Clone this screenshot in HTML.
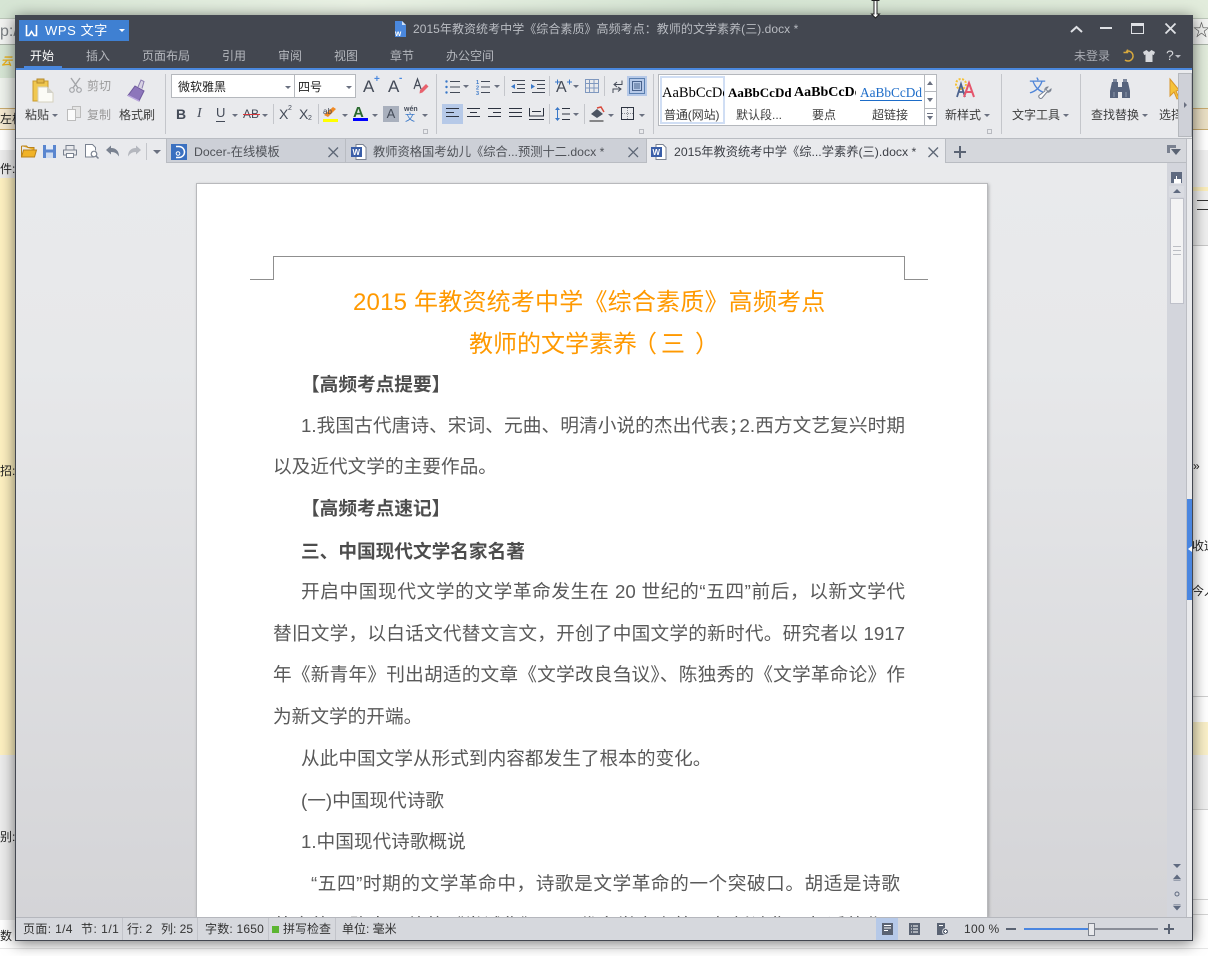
<!DOCTYPE html>
<html><head><meta charset="utf-8"><style>
*{box-sizing:border-box}
html,body{margin:0;padding:0;width:1208px;height:956px;overflow:hidden;background:#fff;font-family:"Liberation Sans","Noto Sans CJK SC",sans-serif}
.a{position:absolute;white-space:nowrap}
.t{position:absolute;white-space:nowrap;font-size:12px;line-height:16px;color:#3c3c3c}
.m{position:absolute;top:48px;font-size:12px;line-height:16px;color:#b4b7bd;white-space:nowrap}
.sep{position:absolute;width:1px;background:#c4c6cb}
.dn{position:absolute;width:0;height:0;border-left:3px solid transparent;border-right:3px solid transparent;border-top:3px solid #6a7080}
svg{position:absolute;overflow:visible}
.l{position:absolute;left:273px;width:632px;height:30px;font-size:18.67px;line-height:30px;color:#595959;white-space:nowrap}
.j{text-align:justify;text-align-last:justify}
.b{font-weight:bold;color:#4d4d4d}
.g{position:absolute;font-family:"Liberation Serif","Noto Serif CJK SC",serif;font-size:14px;line-height:16px;top:85px;overflow:hidden;white-space:nowrap;color:#000}
.tab{position:absolute;top:139px;height:24px;background:#cdd0d7;border-bottom:1px solid #b9bcc2}
.n{position:absolute;top:144px;font-size:12.25px;line-height:16px;color:#4f5258;white-space:nowrap}
</style></head><body>

<!-- background -->
<div class="a" style="left:0;top:0;width:1208px;height:108px;background:linear-gradient(90deg,#d6e5d4,#e9f1e4 30%,#d4e4d2 60%,#e2ecdc)"></div>
<div class="a" style="left:0;top:18px;width:16px;height:27px;background:#f2f3f1;border-bottom:1px solid #aab3a8;border-top:1px solid #bcc7b9"></div>
<div class="a" style="left:0;top:23px;font-size:16px;line-height:18px;color:#7c8084">p:/</div>
<div class="a" style="left:1px;top:57px;width:13px;height:10px;font:bold italic 11px/10px 'Liberation Sans';color:#eab11c">云</div>
<div class="a" style="left:0;top:78px;width:16px;height:30px;background:#eef2ec"></div>
<div class="a" style="left:0;top:108px;width:16px;height:22px;background:#f5ead2;border-top:1px solid #c9ab6e;border-bottom:1px solid #c9ab6e;font-size:12px;line-height:20px;color:#222">左栏</div>
<div class="a" style="left:0;top:150px;width:16px;height:28px;background:#ececec;font-size:12px;line-height:38px;color:#222;overflow:hidden">件:</div>
<div class="a" style="left:0;top:178px;width:16px;height:577px;background:#fdf0c0"></div>
<div class="a" style="left:0;top:463px;font-size:12px;line-height:16px;color:#222">招:</div>
<div class="a" style="left:0;top:755px;width:16px;height:165px;background:#ececec"></div>
<div class="a" style="left:0;top:829px;font-size:12px;line-height:16px;color:#222">别:</div>
<div class="a" style="left:0;top:928px;font-size:12px;line-height:16px;color:#222">数</div>
<div class="a" style="left:1193px;top:18px;width:15px;height:27px;background:#f2f3f1;border-bottom:1px solid #aab3a8;border-top:1px solid #bcc7b9;font-size:17px;line-height:24px;color:#555">☆</div>
<div class="a" style="left:1193px;top:108px;width:15px;height:22px;background:#eadfc4;border-top:1px solid #c9ab6e;border-bottom:1px solid #c9ab6e"></div>
<div class="a" style="left:1193px;top:150px;width:15px;height:96px;background:#efefef;border-bottom:1px solid #c8c8c8"></div>
<div class="a" style="left:1193px;top:187px;width:15px;height:4px;background:#fbeebb"></div>
<div class="a" style="left:1197px;top:200px;width:11px;height:10px;border-top:1px solid #333;border-bottom:1px solid #333"></div>
<div class="a" style="left:1193px;top:458px;font-size:12px;line-height:16px;color:#222">» 《</div>
<div class="a" style="left:1192px;top:538px;font-size:12px;line-height:16px;color:#222">收道</div>
<div class="a" style="left:1192px;top:583px;font-size:12px;line-height:16px;color:#222">今人</div>
<div class="a" style="left:1193px;top:696px;width:15px;height:1px;background:#cfcfcf"></div>
<div class="a" style="left:1193px;top:722px;width:15px;height:33px;background:#faf0c8"></div>
<div class="a" style="left:1193px;top:755px;width:15px;height:55px;background:#f0f0f0;border-bottom:1px solid #d0d0d0"></div>
<div class="a" style="left:1193px;top:899px;width:15px;height:16px;border-top:1px solid #d4d4d4;border-bottom:1px solid #d4d4d4"></div>
<div class="a" style="left:0;top:948px;width:1208px;height:1px;background:#e6e6e6"></div>

<!-- window -->
<div class="a" style="left:15px;top:15px;width:1178px;height:926px;background:#e9eaed;border:1px solid #434750;box-shadow:0 2px 14px rgba(0,0,0,.55)"></div>
<div class="a" style="left:15px;top:15px;width:1178px;height:53px;background:#434750"></div>
<div class="a" style="left:16px;top:68px;width:1176px;height:2px;background:#4a88de"></div>

<!-- WPS button -->
<div class="a" style="left:19px;top:20px;width:110px;height:21px;background:#3f80d2"></div>
<svg style="left:25px;top:24px" width="13" height="13"><path d="M1.500 1v10.500h2.500l2.500-4 2.500 4h2.500V1" fill="none" stroke="#fff" stroke-width="1.600"/></svg>
<div class="a" style="left:45px;top:22px;font-size:13px;line-height:17px;color:#fff;letter-spacing:.6px">WPS 文字</div>
<div class="dn" style="left:119px;top:29px;border-top-color:#fff"></div>

<!-- title -->
<svg style="left:392px;top:21px" width="16" height="16"><path d="M3 0h7l4 4v12H3z" fill="#4a88de"/><path d="M10 0l4 4h-4z" fill="#cfe0f7"/><text x="3" y="15" font-size="8" fill="#fff" font-weight="bold" font-family="Liberation Sans">w</text></svg>
<div class="a" style="left:413px;top:20px;font-size:12px;line-height:18px;color:#b9bcc2;letter-spacing:.05px">2015年教资统考中学《综合素质》高频考点：教师的文学素养(三).docx *</div>

<!-- window controls -->
<svg style="left:1070px;top:22px" width="110" height="14"><path d="M1 10l5.500-5 5.500 5" fill="none" stroke="#dfe1e5" stroke-width="2"/><path d="M30 6h12" stroke="#dfe1e5" stroke-width="2"/><path d="M61.500 1.500h12v10h-12z" fill="none" stroke="#dfe1e5" stroke-width="1"/><path d="M61 3h13" stroke="#dfe1e5" stroke-width="2"/><path d="M95.500 1.500l10 10M105.500 1.500l-10 10" stroke="#dfe1e5" stroke-width="1.800"/></svg>

<!-- menu -->
<div class="m" style="left:30px;color:#fff">开始</div>
<div class="a" style="left:24px;top:66px;width:38px;height:2px;background:#4a88de"></div>
<div class="m" style="left:86px">插入</div>
<div class="m" style="left:142px">页面布局</div>
<div class="m" style="left:222px">引用</div>
<div class="m" style="left:278px">审阅</div>
<div class="m" style="left:334px">视图</div>
<div class="m" style="left:390px">章节</div>
<div class="m" style="left:446px">办公空间</div>
<div class="m" style="left:1074px;color:#a9acb3">未登录</div>
<svg style="left:1122px;top:49px" width="14" height="14"><path d="M4 2.500a5 5 0 1 1-1 8.500M1.500 3.500h4v-3" fill="none" stroke="#d8a93e" stroke-width="1.500"/></svg>
<svg style="left:1143px;top:50px" width="12" height="12"><path d="M3.500 0L0 2l1.200 3L2.500 4.500V12h7V4.500L10.800 5 12 2 8.500 0 6 2z" fill="#d6d8dc"/></svg>
<div class="a" style="left:1166px;top:46px;font-size:14px;line-height:18px;color:#d6d8dc">?</div>
<div class="dn" style="left:1175px;top:55px;border-top-color:#b9bcc2"></div>

<!-- ribbon: clipboard -->
<svg style="left:32px;top:78px" width="22" height="25"><path d="M1 3h15v20H1z" fill="#f0c850" stroke="#c99a2e"/><path d="M5 1h7v4H5z" fill="#e4b94a" stroke="#b58a2c"/><path d="M6 9h9l6 6v9H6z" fill="#fbfbf6" stroke="#d5d0bd"/><path d="M15 9l6 6h-6z" fill="#d2d2cc"/></svg>
<div class="t" style="left:25px;top:107px">粘贴</div><div class="dn" style="left:52px;top:114px"></div>
<svg style="left:69px;top:78px" width="13" height="15"><path d="M2 0l7 10M11 0L4 10" stroke="#a3a5a9" stroke-width="1.400"/><circle cx="3" cy="12" r="2.300" fill="none" stroke="#a3a5a9" stroke-width="1.200"/><circle cx="10" cy="12" r="2.300" fill="none" stroke="#a3a5a9" stroke-width="1.200"/></svg>
<div class="t" style="left:87px;top:78px;color:#9a9a9a">剪切</div>
<svg style="left:67px;top:106px" width="15" height="15"><path d="M5.500 .5h8v11h-8z" fill="#e4e4e4" stroke="#bcbcbc"/><path d="M.5 3.500h8v11h-8z" fill="#fbfbfb" stroke="#bcbcbc"/></svg>
<div class="t" style="left:87px;top:107px;color:#9a9a9a">复制</div>
<svg style="left:127px;top:78px" width="21" height="24"><path d="M11 9l3-7 3 1.500-2 7" fill="#d8d2e4" stroke="#8b7db0"/><path d="M8 8l9 5-5 10-11-5.500z" fill="#8d76bb" stroke="#6f5a9c"/><path d="M1 17.500l11 5.500" stroke="#bda9df" stroke-width="1.500"/></svg>
<div class="t" style="left:119px;top:107px">格式刷</div>
<div class="sep" style="left:165px;top:74px;height:60px"></div>

<!-- font -->
<div class="a" style="left:171px;top:74px;width:185px;height:24px;background:#fff;border:1px solid #b5b8bd"></div>
<div class="sep" style="left:294px;top:75px;height:22px;background:#b5b8bd"></div>
<div class="t" style="left:178px;top:79px;color:#222">微软雅黑</div>
<div class="dn" style="left:285px;top:86px"></div>
<div class="t" style="left:298px;top:79px;color:#222">四号</div>
<div class="dn" style="left:346px;top:86px"></div>
<div class="a" style="left:363px;top:77px;font-size:17px;line-height:20px;color:#444b58">A</div>
<div class="a" style="left:374px;top:75px;font-size:10px;line-height:10px;color:#4a88de;font-weight:bold">+</div>
<div class="a" style="left:388px;top:77px;font-size:17px;line-height:20px;color:#444b58">A</div>
<div class="a" style="left:399px;top:74px;font-size:10px;line-height:10px;color:#4a88de;font-weight:bold">-</div>
<svg style="left:413px;top:78px" width="15" height="18"><path d="M1 11L4.500 1 8 11M2.500 7.500h4" fill="none" stroke="#444b58" stroke-width="1.200"/><path d="M7 12l6-6 2.500 2.500-6 6-3 1z" fill="#e8626e"/></svg>

<div class="a" style="left:176px;top:106px;font-size:14px;line-height:16px;font-weight:bold;color:#444b58">B</div>
<div class="a" style="left:197px;top:106px;font-size:14px;line-height:16px;font-style:italic;color:#444b58;font-family:'Liberation Serif'">I</div>
<div class="a" style="left:216px;top:105px;font-size:13px;line-height:16px;color:#444b58;border-bottom:1px solid #444b58;height:17px">U</div>
<div class="dn" style="left:232px;top:114px"></div>
<div class="a" style="left:243px;top:106px;font-size:12px;line-height:16px;color:#444b58">AB</div>
<div class="a" style="left:243px;top:114px;width:17px;height:1px;background:#d8383c"></div>
<div class="dn" style="left:262px;top:114px"></div>
<div class="sep" style="left:273px;top:104px;height:20px"></div>
<div class="a" style="left:279px;top:106px;font-size:14px;line-height:16px;color:#444b58">X</div><div class="a" style="left:288px;top:104px;font-size:7px;line-height:9px;color:#444b58">2</div>
<div class="a" style="left:299px;top:106px;font-size:14px;line-height:16px;color:#444b58">X</div><div class="a" style="left:308px;top:114px;font-size:7px;line-height:9px;color:#444b58">2</div>
<div class="sep" style="left:318px;top:104px;height:20px"></div>
<svg style="left:323px;top:106px" width="16" height="16"><path d="M1 9l9-8 3 2-8 8z" fill="#f08a24"/><text x="0" y="8" font-size="8" fill="#444b58" font-family="Liberation Sans">ab</text><path d="M0 13h15v3H0z" fill="#ffff00"/></svg>
<div class="dn" style="left:342px;top:114px"></div>
<div class="a" style="left:353px;top:105px;font-size:15px;line-height:15px;color:#2a6a2e;font-weight:bold">A</div>
<div class="a" style="left:353px;top:118px;width:15px;height:3px;background:#0000ff"></div>
<div class="dn" style="left:372px;top:114px"></div>
<div class="a" style="left:383px;top:106px;width:16px;height:16px;background:#a9b0bd;font-size:13px;line-height:16px;color:#444b58;text-align:center">A</div>
<div class="a" style="left:404px;top:106px;font-size:7px;line-height:8px;color:#444b58;font-weight:bold">wén</div>
<div class="a" style="left:405px;top:113px;font-size:10px;line-height:11px;color:#3a78c8">文</div>
<div class="dn" style="left:422px;top:114px"></div>
<div class="a" style="left:423px;top:129px;width:5px;height:5px;border:1px solid #8a8d94;border-left:0;border-top:0;outline:1px solid #b8bac0;outline-offset:-1px"></div>
<div class="sep" style="left:436px;top:74px;height:60px"></div>

<!-- para -->
<svg style="left:445px;top:80px" width="15" height="14"><g fill="#3a78c8"><circle cx="1.500" cy="1.500" r="1.200"/><circle cx="1.500" cy="7" r="1.200"/><circle cx="1.500" cy="12.500" r="1.200"/></g><path d="M5 1.500h10M5 7h10M5 12.500h10" stroke="#444b58"/></svg>
<div class="dn" style="left:463px;top:85px"></div>
<svg style="left:476px;top:79px" width="14" height="16"><text x="0" y="5" font-size="5.500" fill="#3a78c8" font-family="Liberation Sans" font-weight="bold">1</text><text x="0" y="10.500" font-size="5.500" fill="#3a78c8" font-family="Liberation Sans" font-weight="bold">2</text><text x="0" y="16" font-size="5.500" fill="#3a78c8" font-family="Liberation Sans" font-weight="bold">3</text><path d="M5 2.500h9M5 8h9M5 13.500h9" stroke="#444b58"/></svg>
<div class="dn" style="left:494px;top:85px"></div>
<div class="sep" style="left:504px;top:76px;height:20px"></div>
<svg style="left:511px;top:80px" width="14" height="14"><path d="M1 .5h13M6 4.500h8M6 8.500h8M1 12.500h13" stroke="#444b58"/><path d="M0 6.500l4-2.500v5z" fill="#3a78c8"/></svg>
<svg style="left:531px;top:80px" width="14" height="14"><path d="M1 .5h13M6 4.500h8M6 8.500h8M1 12.500h13" stroke="#444b58"/><path d="M4 6.500L0 4v5z" fill="#3a78c8"/></svg>
<div class="sep" style="left:549px;top:76px;height:20px"></div>
<div class="a" style="left:556px;top:79px;font-size:16px;line-height:18px;color:#444b58">A</div>
<svg style="left:555px;top:79px" width="17" height="6"><path d="M0 3h5M2.500 .5v5M12 3h5M14.500 .5v5" stroke="#3a78c8"/></svg>
<div class="dn" style="left:573px;top:85px"></div>
<svg style="left:585px;top:79px" width="14" height="14"><path d="M.5 4.500h13M.5 9h13M4.500.5v13M9 .5v13M.5.5h13v13h-13z" fill="none" stroke="#7f98bf"/></svg>
<div class="sep" style="left:604px;top:76px;height:20px"></div>
<svg style="left:612px;top:80px" width="11" height="14"><path d="M10 .5v4H3M5 2L2 4.500 5 7M1 13V9h7M6 7l3 2-3 2.500" fill="none" stroke="#444b58"/></svg>
<div class="a" style="left:627px;top:76px;width:20px;height:20px;background:#b6c9e8"></div>
<svg style="left:629px;top:78px" width="16" height="16"><path d="M.5.5h15v15H.5z" fill="none" stroke="#5a7fb0"/><path d="M3.500 3.500h9v9h-9zM5 6h6M5 8h6M5 10h6" fill="none" stroke="#48628c"/></svg>

<div class="a" style="left:442px;top:104px;width:21px;height:20px;background:#b6c9e8"></div>
<svg style="left:446px;top:108px" width="13" height="12"><path d="M0 .5h13M0 4.500h8M0 8.500h13" stroke="#2d3340"/></svg>
<svg style="left:467px;top:108px" width="13" height="12"><path d="M0 .5h13M3 4.500h7M0 8.500h13" stroke="#2d3340"/></svg>
<svg style="left:488px;top:108px" width="13" height="12"><path d="M0 .5h13M5 4.500h8M0 8.500h13" stroke="#2d3340"/></svg>
<svg style="left:509px;top:108px" width="13" height="12"><path d="M0 .5h13M0 4.500h13M0 8.500h13" stroke="#2d3340"/></svg>
<svg style="left:529px;top:107px" width="15" height="13"><path d="M0 12.500h15M.5 1v8M14.500 1v8M0 9h15M3 4.500h9" stroke="#2d3340"/></svg>
<div class="sep" style="left:549px;top:104px;height:20px"></div>
<svg style="left:555px;top:107px" width="15" height="14"><path d="M2.500 1v12" stroke="#3a78c8"/><path d="M0 3l2.500-3L5 3zM0 11l2.500 3L5 11z" fill="#3a78c8"/><path d="M7 1.500h8M7 7h8M7 12.500h8" stroke="#2d3340"/></svg>
<div class="dn" style="left:573px;top:113px"></div>
<div class="sep" style="left:584px;top:104px;height:20px"></div>
<svg style="left:589px;top:106px" width="16" height="16"><path d="M2 8l6-5 6 5-6 4z" fill="#4d5563"/><path d="M8 2l4-1 3 5" fill="none" stroke="#d84a3c" stroke-width="1.500"/><path d="M.5 14.500h14v1H.5z" fill="#222"/></svg>
<div class="dn" style="left:608px;top:114px"></div>
<svg style="left:621px;top:107px" width="13" height="13"><path d="M.5.5h12v12H.5z" fill="none" stroke="#2d3340"/><path d="M6.500 1v11M1 6.500h11" stroke="#8a8d94" stroke-dasharray="1 1"/></svg>
<div class="dn" style="left:639px;top:114px"></div>
<div class="a" style="left:639px;top:129px;width:5px;height:5px;border:1px solid #8a8d94;border-left:0;border-top:0;outline:1px solid #b8bac0;outline-offset:-1px"></div>
<div class="sep" style="left:653px;top:74px;height:60px"></div>

<!-- gallery -->
<div class="a" style="left:658px;top:74px;width:279px;height:52px;background:#fff;border:1px solid #b5b8bd"></div>
<div class="a" style="left:660px;top:76px;width:65px;height:48px;border:2px solid #d0def4"></div>
<div class="g" style="left:662px;width:62px;font-size:14.500px">AaBbCcDd</div>
<div class="g" style="left:728px;width:63px;font-size:13px;font-weight:bold">AaBbCcDd</div>
<div class="g" style="left:794px;width:62px;font-size:14px;font-weight:bold">AaBbCcDd</div>
<div class="g" style="left:860px;width:62px;color:#1d6cc8;font-size:13.300px"><span style="border-bottom:1px solid #1d6cc8">AaBbCcDd</span></div>
<div class="t" style="left:664px;top:107px;font-size:12px;letter-spacing:-.1px">普通(网站)</div>
<div class="t" style="left:736px;top:107px">默认段...</div>
<div class="t" style="left:812px;top:107px">要点</div>
<div class="t" style="left:872px;top:107px">超链接</div>
<div class="a" style="left:924px;top:75px;width:1px;height:50px;background:#b5b8bd"></div>
<div class="a" style="left:925px;top:91px;width:11px;height:1px;background:#b5b8bd"></div>
<div class="a" style="left:925px;top:108px;width:11px;height:1px;background:#b5b8bd"></div>
<div class="dn" style="left:927px;top:81px;border-top:0;border-bottom:4px solid #6a7080"></div>
<div class="dn" style="left:927px;top:98px;border-top-width:4px"></div>
<svg style="left:927px;top:113px" width="6" height="8"><path d="M0 .5h6" stroke="#6a7080"/><path d="M0 3h6L3 7z" fill="#6a7080"/></svg>

<svg style="left:952px;top:77px" width="28" height="22"><circle cx="9" cy="7" r="5" fill="none" stroke="#f4c136" stroke-width="2" stroke-dasharray="2 1.500"/><path d="M5 20l4-13 4 13M6.500 15h5" fill="none" stroke="#4d6490" stroke-width="1.800"/><path d="M12 20l5-14 5 14M14 15h6" fill="none" stroke="#e5566d" stroke-width="2"/></svg>
<div class="t" style="left:945px;top:107px">新样式</div><div class="dn" style="left:984px;top:114px"></div>
<div class="a" style="left:987px;top:129px;width:5px;height:5px;border:1px solid #8a8d94;border-left:0;border-top:0;outline:1px solid #b8bac0;outline-offset:-1px"></div>
<div class="sep" style="left:1001px;top:74px;height:60px"></div>
<div class="a" style="left:1029px;top:77px;font-size:17px;line-height:20px;color:#4f85d8">文</div>
<svg style="left:1038px;top:86px" width="15" height="15"><path d="M13 3a3 3 0 0 1-4 3L4 12a2 2 0 0 1-3-2.500L7 5a3 3 0 0 1 3-4L8 3.500l2 2z" fill="#fff" stroke="#7a8290"/></svg>
<div class="t" style="left:1012px;top:107px">文字工具</div><div class="dn" style="left:1063px;top:114px"></div>
<div class="sep" style="left:1080px;top:74px;height:60px"></div>
<svg style="left:1109px;top:79px" width="22" height="21"><path d="M3 3h6v5h4V3h6l2 9v7h-8v-6h-4v6H1v-7z" fill="#56637c"/><path d="M4 3V0h4v3M14 3V0h4v3" fill="#7b869b"/><path d="M5 13v5M17 13v5" stroke="#8d98ad"/></svg>
<div class="t" style="left:1091px;top:107px">查找替换</div><div class="dn" style="left:1142px;top:114px"></div>
<svg style="left:1170px;top:79px" width="9" height="21"><path d="M0 0l9 11-3 1 3 7-2 1-3-7-4 4z" fill="#f6c33a" stroke="#d9962a"/></svg>
<div class="t" style="left:1159px;top:107px;width:19px;overflow:hidden">选择</div>
<div class="a" style="left:1178px;top:73px;width:14px;height:64px;background:#cfd1d8;border:1px solid #b5b8bd"></div>
<div class="a" style="left:1184px;top:102px;width:0;height:0;border-top:3px solid transparent;border-bottom:3px solid transparent;border-left:3px solid #6a7080"></div>

<!-- tab row -->
<div class="a" style="left:16px;top:138px;width:1176px;height:1px;background:#b9bcc2"></div>
<svg style="left:21px;top:144px" width="16" height="14"><path d="M.5 2V13h13l2-7h-13l-2 7M.5 2h5l1.500 1.500h6V6" fill="#f1b327" stroke="#b9821c"/></svg>
<svg style="left:43px;top:145px" width="13" height="13"><path d="M0 0h13v13H0z" fill="#5a86cf"/><path d="M3 0h7v4.500H3z" fill="#e3ebf7"/><path d="M3 7.500h7V13H3z" fill="#cfdcf0"/></svg>
<svg style="left:63px;top:145px" width="14" height="13"><path d="M3 5V.5h8V5M3 10H.5V5h13v5H11" fill="#e9eaed" stroke="#7a8290"/><path d="M3.500 8.500h7v4h-7z" fill="#fff" stroke="#7a8290"/></svg>
<svg style="left:85px;top:144px" width="14" height="15"><path d="M9 13H.5V.5h7l3 3v3" fill="#fff" stroke="#7a8290"/><circle cx="9" cy="10" r="2.800" fill="#fff" stroke="#7a8290" stroke-width="1.200"/><path d="M11 12l2.500 2.500" stroke="#7a8290" stroke-width="1.500"/></svg>
<svg style="left:106px;top:145px" width="14" height="12"><path d="M0 5l5-4.500V3c5 0 8 3 8 8.500C11 8.500 9 7 5 7v2.500z" fill="#7a8290"/></svg>
<svg style="left:128px;top:145px" width="14" height="12"><path d="M13 5L8 .5V3C3 3 0 6 0 11.500 2 8.500 4 7 8 7v2.500z" fill="#b4b7be"/></svg>
<div class="sep" style="left:146px;top:143px;height:17px"></div>
<div class="dn" style="left:153px;top:150px;border-left-width:4px;border-right-width:4px;border-top-width:4px"></div>

<div class="a" style="left:166px;top:139px;width:1px;height:24px;background:#b9bcc2"></div>
<div class="tab" style="left:167px;width:179px"></div>
<div class="a" style="left:345px;top:139px;width:1px;height:24px;background:#b9bcc2"></div>
<div class="tab" style="left:346px;width:300px"></div>
<div class="a" style="left:646px;top:139px;width:1px;height:24px;background:#b9bcc2"></div>
<div class="a" style="left:945px;top:139px;width:1px;height:24px;background:#b9bcc2"></div>
<div class="tab" style="left:946px;width:240px;background:#d5d7dc"></div>
<svg style="left:171px;top:144px" width="16" height="16"><path d="M0 0h16v16H0z" fill="#3a70c0"/><path d="M5 2.500h3a5.500 5.500 0 0 1 0 11H5" fill="none" stroke="#fff" stroke-width="1.500"/><circle cx="7" cy="9.500" r="1.800" fill="none" stroke="#fff"/></svg>
<div class="n" style="left:194px">Docer-在线模板</div>
<svg style="left:328px;top:147px" width="11" height="11"><path d="M.5 .5l9.500 9.500M10 .5L.5 10" stroke="#5e6776" stroke-width="1.300"/></svg>
<svg style="left:351px;top:144px" width="16" height="16"><path d="M5 .5h7l3 3v12H5z" fill="#fff" stroke="#7b8392"/><path d="M0 3h11v10H0z" fill="#3a5ea8"/><text x="1.500" y="11" font-size="8" font-weight="bold" fill="#fff" font-family="Liberation Sans">W</text></svg>
<div class="n" style="left:373px">教师资格国考幼儿《综合...预测十二.docx *</div>
<svg style="left:628px;top:147px" width="11" height="11"><path d="M.5 .5l9.500 9.500M10 .5L.5 10" stroke="#5e6776" stroke-width="1.300"/></svg>
<svg style="left:651px;top:144px" width="16" height="16"><path d="M5 .5h7l3 3v12H5z" fill="#fff" stroke="#7b8392"/><path d="M0 3h11v10H0z" fill="#3a5ea8"/><text x="1.500" y="11" font-size="8" font-weight="bold" fill="#fff" font-family="Liberation Sans">W</text></svg>
<div class="n" style="left:674px;color:#3c3f46">2015年教资统考中学《综...学素养(三).docx *</div>
<svg style="left:928px;top:147px" width="11" height="11"><path d="M.5 .5l9.500 9.500M10 .5L.5 10" stroke="#5e6776" stroke-width="1.300"/></svg>
<svg style="left:954px;top:146px" width="12" height="12"><path d="M6 0v12M0 6h12" stroke="#5a6373" stroke-width="2"/></svg>
<svg style="left:1167px;top:145px" width="14" height="11"><path d="M0 0h9v3H3v5H0z" fill="#7a8190"/><path d="M4 4h10l-5 6z" fill="#5a6373"/></svg>

<!-- doc area -->
<div class="a" style="left:16px;top:163px;width:1151px;height:754px;background:linear-gradient(180deg,#e9eaec 0,#e7e8ea 200px,#d4d4d7 754px)"></div>
<div class="a" style="left:196px;top:183px;width:792px;height:734px;background:#fff;border:1px solid #b8b9bc;border-bottom:0;box-shadow:1px 1px 3px rgba(0,0,0,.25)"></div>
<svg style="left:250px;top:256px" width="678" height="24"><path d="M0 23.500h23.500V.5h631v23h23.500" fill="none" stroke="#8f8f8f"/></svg>

<div class="a" style="left:353px;top:285px;font-size:24px;line-height:36px;color:#ff9900;letter-spacing:.2px">2015 年教资统考中学《综合素质》高频考点</div>
<div class="a" style="left:469px;top:327px;font-size:24px;line-height:36px;color:#ff9900">教师的文学素养<span style="position:relative;left:-4px">（</span>三<span style="position:relative;left:10px">）</span></div>

<div class="l b" style="top:370px;left:301px;width:auto">【高频考点提要】</div>
<div class="l j" style="top:411px;left:301px;width:604px">1.我国古代唐诗、宋词、元曲、明清小说的杰出代表<span style="letter-spacing:-8px">；</span>2.西方文艺复兴时期</div>
<div class="l" style="top:452px">以及近代文学的主要作品。</div>
<div class="l b" style="top:494px;left:301px;width:auto">【高频考点速记】</div>
<div class="l b" style="top:537px;left:301px;width:auto">三、中国现代文学名家名著</div>
<div class="l j" style="top:577px;left:301px;width:604px">开启中国现代文学的文学革命发生在 20 世纪的“五四”前后，以新文学代</div>
<div class="l j" style="top:619px">替旧文学，以白话文代替文言文，开创了中国文学的新时代。研究者以 1917</div>
<div class="l j" style="top:660px">年《新青年》刊出胡适的文章《文学改良刍议》、陈独秀的《文学革命论》作</div>
<div class="l" style="top:702px">为新文学的开端。</div>
<div class="l" style="top:744px;left:301px;width:auto">从此中国文学从形式到内容都发生了根本的变化。</div>
<div class="l" style="top:786px;left:301px;width:auto">(一)中国现代诗歌</div>
<div class="l" style="top:827px;left:301px;width:auto">1.中国现代诗歌概说</div>
<div class="l j" style="top:869px;left:311px;width:589px">“五四”时期的文学革命中，诗歌是文学革命的一个突破口。胡适是诗歌</div>
<div class="a" style="left:196px;top:904px;width:790px;height:13px;overflow:hidden"><div class="l j" style="top:7px;left:77px;width:630px">革命的开路人，他的《尝试集》是现代文学史上第一部新诗集，胡适的作品</div></div>

<!-- scrollbar -->
<div class="a" style="left:1167px;top:163px;width:19px;height:754px;background:#d3d5dc"></div>
<div class="a" style="left:1186px;top:139px;width:1px;height:778px;background:#bcbec4"></div>
<div class="a" style="left:1187px;top:139px;width:5px;height:778px;background:#e9eaed"></div>
<svg style="left:1171px;top:172px" width="11" height="11"><path d="M0 0h11v11H0z" fill="#5f6a80"/><path d="M5.500 4v4M3.500 7.500h6V11h-6z" fill="#fff" stroke="#fff"/></svg>
<div class="a" style="left:1169px;top:186px;width:15px;height:11px;background:#d9dbe1"></div>
<div class="dn" style="left:1173px;top:189px;border-left-width:4px;border-right-width:4px;border-top:0;border-bottom:4px solid #5f6a80"></div>
<div class="a" style="left:1170px;top:198px;width:14px;height:106px;background:#f3f3f4;border:1px solid #bfc1ca"></div>
<div class="a" style="left:1173px;top:246px;width:8px;height:1px;background:#bcbec4;box-shadow:0 4px 0 #bcbec4,0 8px 0 #bcbec4"></div>
<div class="dn" style="left:1173px;top:864px;border-left-width:4px;border-right-width:4px;border-top-width:4px;border-top-color:#5f6a80"></div>
<svg style="left:1173px;top:875px" width="8" height="40"><path d="M4 0L7.500 4h-7zM0.500 5.500h7" fill="#5f6a80" stroke="#5f6a80" stroke-width=".6"/><circle cx="4" cy="19" r="2" fill="none" stroke="#5f6a80"/><path d="M4 35L7.500 31h-7zM.5 29.500h7" fill="#5f6a80" stroke="#5f6a80" stroke-width=".6"/></svg>
<div class="a" style="left:1187px;top:499px;width:5px;height:101px;background:#4a86e0"></div>
<div class="a" style="left:1188px;top:546px;width:0;height:0;border-top:3px solid transparent;border-bottom:3px solid transparent;border-right:4px solid #fff"></div>

<!-- status -->
<div class="a" style="left:16px;top:917px;width:1176px;height:23px;background:#d6d8dd;border-top:1px solid #b5b7bd"></div>
<div class="t" style="left:23px;top:921px;color:#333;letter-spacing:.35px">页面: 1/4</div>
<div class="t" style="left:81px;top:921px;color:#333;letter-spacing:.5px">节: 1/1</div>
<div class="sep" style="left:122px;top:918px;height:22px;background:#c2c4ca"></div>
<div class="t" style="left:127px;top:921px;color:#333">行: 2</div>
<div class="t" style="left:161px;top:921px;color:#333">列: 25</div>
<div class="sep" style="left:197px;top:918px;height:22px;background:#c2c4ca"></div>
<div class="t" style="left:205px;top:921px;color:#333;letter-spacing:.2px">字数: 1650</div>
<div class="sep" style="left:268px;top:918px;height:22px;background:#c2c4ca"></div>
<div class="a" style="left:272px;top:926px;width:7px;height:7px;background:#5cb531"></div>
<div class="t" style="left:283px;top:921px;color:#333">拼写检查</div>
<div class="sep" style="left:335px;top:918px;height:22px;background:#c2c4ca"></div>
<div class="t" style="left:342px;top:921px;color:#333">单位: 毫米</div>

<div class="a" style="left:876px;top:918px;width:22px;height:22px;background:#b6c9e8"></div>
<svg style="left:882px;top:923px" width="11" height="12"><path d="M0 0h11v12H0z" fill="#5a6373"/><path d="M2 2.500h7M2 5h7M2 7.500h4" stroke="#fff"/></svg>
<svg style="left:909px;top:923px" width="11" height="12"><path d="M0 0h11v12H0z" fill="#5a6373"/><path d="M2 3h1M4 3h5M2 6h1M4 6h5M2 9h1M4 9h5" stroke="#fff"/></svg>
<svg style="left:937px;top:923px" width="12" height="12"><path d="M0 0h8v12H0z" fill="#5a6373"/><path d="M2 2.500h4" stroke="#fff"/><circle cx="8.500" cy="8.500" r="3" fill="#5a6373" stroke="#d6d8dd"/><path d="M7 8.500h3M8.500 7v3" stroke="#fff"/></svg>
<div class="t" style="left:964px;top:921px;color:#333;letter-spacing:.3px">100 %</div>
<div class="a" style="left:1006px;top:928px;width:10px;height:2px;background:#5a6373"></div>
<div class="a" style="left:1024px;top:928px;width:134px;height:2px;background:#8a8e98"></div>
<div class="a" style="left:1024px;top:928px;width:65px;height:2px;background:#4a86e0"></div>
<div class="a" style="left:1088px;top:923px;width:7px;height:13px;background:#e9eaed;border:1px solid #7d828c"></div>
<svg style="left:1164px;top:924px" width="10" height="10"><path d="M5 0v10M0 5h10" stroke="#5a6373" stroke-width="2"/></svg>

<!-- I-beam cursor -->
<svg style="left:871px;top:0" width="9" height="19"><path d="M3 0v14H.5l4 4 4-4H6V0" fill="#fff" stroke="#222"/><path d="M.5 0h8" stroke="#222" stroke-width="2"/></svg>
</body></html>
